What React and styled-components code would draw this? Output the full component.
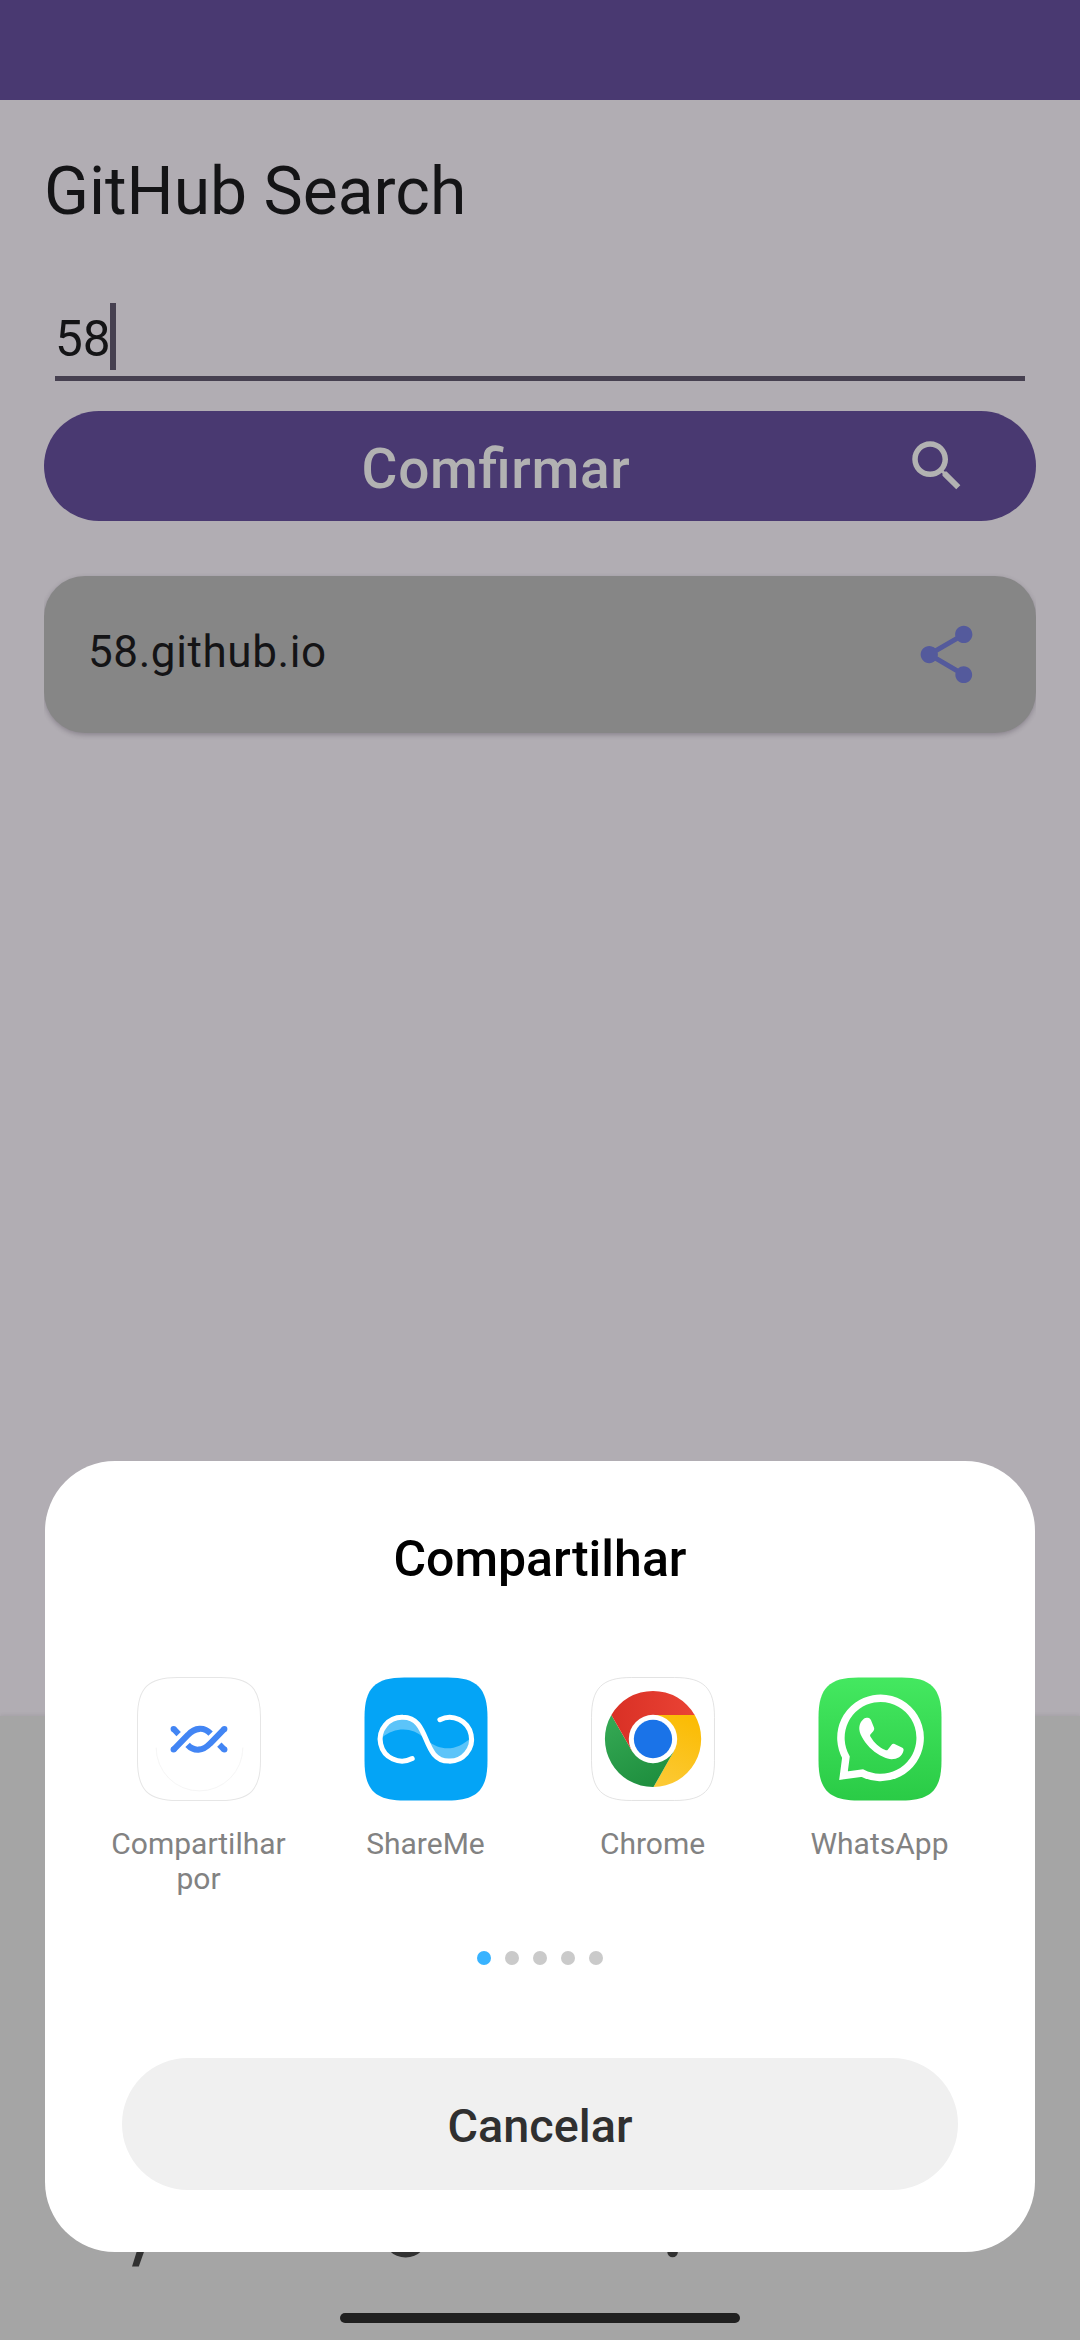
import React from "react";
import styled, { createGlobalStyle } from "styled-components";

const Global = createGlobalStyle`
  * { box-sizing: border-box; }
  html, body { margin: 0; padding: 0; background: #b1adb3; }
  body { font-family: Roboto, "Noto Sans", sans-serif; -webkit-font-smoothing: antialiased; }
  button { font-family: inherit; border: 0; padding: 0; margin: 0; }
`;

const Screen = styled.main`
  position: relative;
  width: 1080px;
  height: 2340px;
  overflow: hidden;
  display: flex;
  flex-direction: column;
  background: #b1adb3;
`;

const StatusBar = styled.header`
  flex: none;
  height: 100px;
  background: #493971;
`;

const Content = styled.section`
  flex: 1;
  display: flex;
  flex-direction: column;
  padding: 53px 44px 0;
`;

const Heading = styled.h1`
  margin: 0;
  height: 78px;
  font-size: 66px;
  line-height: 78px;
  font-weight: 400;
  color: #141416;
`;

const Field = styled.div`
  margin: 72px 11px 0;
  height: 78px;
  display: flex;
  align-items: flex-start;
  border-bottom: 5.6px solid #464050;
`;

const FieldText = styled.span`
  height: 67px;
  font-size: 49.5px;
  line-height: 72px;
  color: #141416;
`;

const Caret = styled.span`
  width: 6px;
  height: 67px;
  margin-left: -1px;
  background: #464050;
`;

const ConfirmButton = styled.button`
  margin-top: 30px;
  height: 110px;
  flex: none;
  display: flex;
  align-items: center;
  gap: 22px;
  padding: 0 66px;
  border-radius: 55px;
  background: #493971;
  color: #b2b2b2;
`;

const ConfirmLabel = styled.span`
  flex: 1;
  text-align: center;
  font-size: 55px;
  line-height: 64px;
  padding-top: 6px;
  font-weight: 500;
  letter-spacing: 0.65px;
  font-feature-settings: "liga" 1;
`;

const Icon = styled.svg`
  flex: none;
  display: block;
  width: ${(p) => p.$size}px;
  height: ${(p) => p.$size}px;
  fill: currentColor;
`;

const Results = styled.div`
  margin-top: 55px;
  clip-path: inset(-20px 0);
`;

const ResultCard = styled.article`
  height: 157px;
  display: flex;
  align-items: center;
  justify-content: space-between;
  padding: 0 55px 0 44px;
  border-radius: 41px;
  background: #868686;
  box-shadow: 0 2px 5px rgba(40, 30, 45, 0.28);
  color: #545a9c;
`;

const ResultName = styled.span`
  font-size: 44px;
  line-height: 52px;
  padding-bottom: 5px;
  letter-spacing: 0.6px;
  color: #141416;
`;

const Keyboard = styled.section`
  flex: none;
  height: 624px;
  display: flex;
  flex-direction: column;
  justify-content: flex-end;
  align-items: center;
  background: #a5a5a5;
  box-shadow: 0 -1px 4px rgba(0, 0, 0, 0.08);
`;

const KeyRow = styled.svg`
  display: block;
  width: 1080px;
  height: 30px;
  margin-bottom: 43px;
  fill: #313131;
`;

const GestureBar = styled.div`
  width: 400px;
  height: 10px;
  margin-bottom: 17px;
  border-radius: 5px;
  background: #202020;
`;

const Sheet = styled.section`
  position: absolute;
  left: 45px;
  top: 1461px;
  width: 990px;
  height: 791px;
  padding: 69px 77px 62px;
  display: flex;
  flex-direction: column;
  align-items: center;
  border-radius: 70px;
  background: #fff;
`;

const SheetTitle = styled.h2`
  margin: 0;
  height: 58px;
  font-size: 50px;
  line-height: 58px;
  font-weight: 500;
  color: #000;
`;

const Apps = styled.div`
  margin: 89px 2px 0 0;
  width: 908px;
  height: 255px;
  display: grid;
  grid-template-columns: repeat(4, 227px);
`;

const AppItem = styled.div`
  display: flex;
  flex-direction: column;
  align-items: center;
`;

const AppLabel = styled.span`
  margin-top: 25px;
  width: 180px;
  text-align: center;
  font-size: 30px;
  line-height: 35px;
  color: #828282;
`;

const Logo = styled.svg`
  display: block;
  width: 124px;
  height: 124px;
`;

const Dots = styled.div`
  margin-top: 19px;
  display: flex;
  gap: 14px;
`;

const Dot = styled.span`
  width: 14px;
  height: 14px;
  border-radius: 50%;
  background: ${(p) => (p.$active ? "#38b3ff" : "#cacaca")};
`;

const CancelButton = styled.button`
  margin-top: auto;
  width: 836px;
  height: 132px;
  border-radius: 66px;
  background: #f0f0f0;
  color: #303030;
  font-size: 46.75px;
  line-height: 56px;
  font-weight: 500;
  padding-top: 3px;
`;

/* Rounded tile shared by every launcher icon, 123 x 123 */
const TILE =
  "M0.5 40C0.5 11 11 0.5 40 0.5H83C112 0.5 122.5 11 122.5 40V83C122.5 112 112 122.5 83 122.5H40C11 122.5 0.5 112 0.5 83Z";

const NearbyLogo = () => (
  <Logo viewBox="0 0 123 123">
    <path d={TILE} fill="#fff" stroke="#e6e6e6" />
    <path d="M19 70A43 43 0 0 0 105 70" fill="none" stroke="#f3f3f3" strokeWidth="0.8" />
    <g fill="none" stroke="#4285f4" strokeWidth="6">
      <path d="M36.3 72L50.5 57.500C57.500 50 66.500 49.300 73 56.200" />
      <path d="M86.700 51.500L72.500 66C65.500 73.500 56.500 74.200 50.200 67.300" />
      <path d="M36.300 51.500L41.300 56.600" />
      <path d="M86.500 72L81.700 67" />
    </g>
    <g fill="#4285f4">
      <circle cx="36.300" cy="51.600" r="3" />
      <circle cx="36.300" cy="71.900" r="3" />
      <circle cx="86.700" cy="51.600" r="3" />
      <circle cx="86.700" cy="71.900" r="3" />
    </g>
  </Logo>
);

const ShareMeLogo = () => (
  <Logo viewBox="0 0 123 123">
    <path d={TILE} fill="#04a4f6" />
    <path d="M18 60C20 46 28 40.500 39 40.500C50 40.500 55 49 58.500 60C49 50 31 49 18 60Z" fill="#5cc4f9" />
    <path d="M63 63C68 76 73 82.500 84 82.500C95 82.500 104 75 105 61C94 72 77 75 63 63Z" fill="#5cc4f9" />
    <path
      d="M47.800 80.900A21.700 21.700 0 1 1 38.700 40C66 40 57 83.400 84 83.400A21.700 21.700 0 1 0 75.300 42.300"
      fill="none"
      stroke="#fff"
      strokeWidth="5"
      strokeLinecap="round"
    />
  </Logo>
);

const ChromeLogo = () => (
  <Logo viewBox="0 0 123 123">
    <defs>
      <linearGradient id="cr" x1="0" x2="1"><stop offset="0" stopColor="#d93025" /><stop offset="1" stopColor="#ea4335" /></linearGradient>
      <linearGradient id="cy" x1="0.300" y1="1" x2="0.600" y2="0"><stop offset="0" stopColor="#fcc934" /><stop offset="1" stopColor="#fbbc04" /></linearGradient>
      <linearGradient id="cg" x1="0.700" y1="1" x2="0.200" y2="0"><stop offset="0" stopColor="#1e8e3e" /><stop offset="1" stopColor="#34a853" /></linearGradient>
    </defs>
    <path d={TILE} fill="#fff" stroke="#dcdcdc" strokeWidth="0.8" />
    <g transform="translate(61.500 61.500)">
      <path d="M0 -24H41.300A47.700 47.700 0 0 1 0.500 47.700L20.800 12Z" fill="url(#cy)" />
      <path d="M0.500 47.700A47.700 47.700 0 0 1 -41.300 -23.850L-20.800 12L0 24L20.800 12Z" fill="url(#cg)" />
      <path d="M-41.300 -23.850A47.700 47.700 0 0 1 41.300 -23.850H0L-20.800 12Z" fill="url(#cr)" />
      <circle r="24" fill="#fff" />
      <circle r="19" fill="#1a73e8" />
    </g>
  </Logo>
);

const WhatsAppLogo = () => (
  <Logo viewBox="0 0 123 123">
    <defs>
      <linearGradient id="wa" x1="0" y1="0" x2="0" y2="1"><stop offset="0" stopColor="#44e860" /><stop offset="1" stopColor="#2acb46" /></linearGradient>
    </defs>
    <path d={TILE} fill="url(#wa)" />
    <path
      d="M25.300 97.800L44 95.300A39.300 39.300 0 1 0 27.700 79.500Z"
      fill="none"
      stroke="#fff"
      strokeWidth="7.400"
      strokeLinejoin="miter"
    />
    <path
      d="M49 40.500C50.800 40.300 51.800 41.200 52.600 43L55.500 50C56 51.300 55.800 52.300 54.800 53.700L52.200 56.800C51.500 57.600 51.500 58.200 52.100 59.200C56 65.600 60.500 69.600 66.800 72.400C67.900 72.900 68.700 72.700 69.400 71.800L72.800 67.500C73.600 66.400 74.700 66 75.900 66.500L83.200 70C84.600 70.700 85.200 71.500 84.800 73.200C83.500 79 78.500 81.500 73 81.500C68.500 81.500 60 78 53.500 72C47.500 66.500 41.500 58 41 52C40.700 47 42.800 43.500 45.500 41.300C46.400 40.600 47.800 40.500 49 40.500Z"
      fill="#fff"
    />
  </Logo>
);

const APPS = [
  { label: "Compartilhar por", Art: NearbyLogo },
  { label: "ShareMe", Art: ShareMeLogo },
  { label: "Chrome", Art: ChromeLogo },
  { label: "WhatsApp", Art: WhatsAppLogo },
];

export default function App() {
  return (
    <Screen>
      <Global />
      <StatusBar />
      <Content>
        <Heading>GitHub Search</Heading>
        <Field>
          <FieldText>58</FieldText>
          <Caret />
        </Field>
        <ConfirmButton>
          <ConfirmLabel>Comfirmar</ConfirmLabel>
          <Icon $size={66} viewBox="0 0 24 24">
            <path d="M15.500 14h-0.790l-0.280-0.270C15.410 12.590 16 11.110 16 9.500 16 5.910 13.090 3 9.500 3S3 5.910 3 9.500 5.910 16 9.500 16c1.610 0 3.090-0.590 4.230-1.570l0.270 0.280v0.790l5 4.990L20.490 19l-4.990-5zm-6 0C7.010 14 5 11.990 5 9.500S7.010 5 9.500 5 14 7.010 14 9.500 11.990 14 9.500 14z" />
          </Icon>
        </ConfirmButton>
        <Results>
          <ResultCard>
            <ResultName>58.github.io</ResultName>
            <Icon $size={69} viewBox="0 0 24 24">
              <path d="M18 16.080c-0.760 0-1.440 0.300-1.960 0.770L8.910 12.700c0.050-0.230 0.090-0.460 0.090-0.700s-0.040-0.470-0.090-0.700l7.050-4.110c0.540 0.500 1.250 0.810 2.040 0.810 1.660 0 3-1.340 3-3s-1.340-3-3-3-3 1.340-3 3c0 0.240 0.040 0.470 0.090 0.700L8.040 9.810C7.500 9.310 6.790 9 6 9c-1.660 0-3 1.340-3 3s1.340 3 3 3c0.790 0 1.500-0.310 2.040-0.810l7.120 4.160c-0.050 0.210-0.080 0.430-0.080 0.650 0 1.610 1.310 2.920 2.920 2.920s2.920-1.310 2.920-2.920-1.310-2.920-2.920-2.920z" />
            </Icon>
          </ResultCard>
        </Results>
      </Content>
      <Keyboard>
        <KeyRow viewBox="0 0 1080 30">
          <path d="M137.500 9H145L138.800 26.500H132Z" />
          <circle cx="405.600" cy="-5.500" r="23" />
          <circle cx="672.600" cy="12" r="5.300" />
        </KeyRow>
        <GestureBar />
      </Keyboard>
      <Sheet>
        <SheetTitle>Compartilhar</SheetTitle>
        <Apps>
          {APPS.map(({ label, Art }) => (
            <AppItem key={label}>
              <Art />
              <AppLabel>{label}</AppLabel>
            </AppItem>
          ))}
        </Apps>
        <Dots>
          {[0, 1, 2, 3, 4].map((i) => (
            <Dot key={i} $active={i === 0} />
          ))}
        </Dots>
        <CancelButton>Cancelar</CancelButton>
      </Sheet>
    </Screen>
  );
}
